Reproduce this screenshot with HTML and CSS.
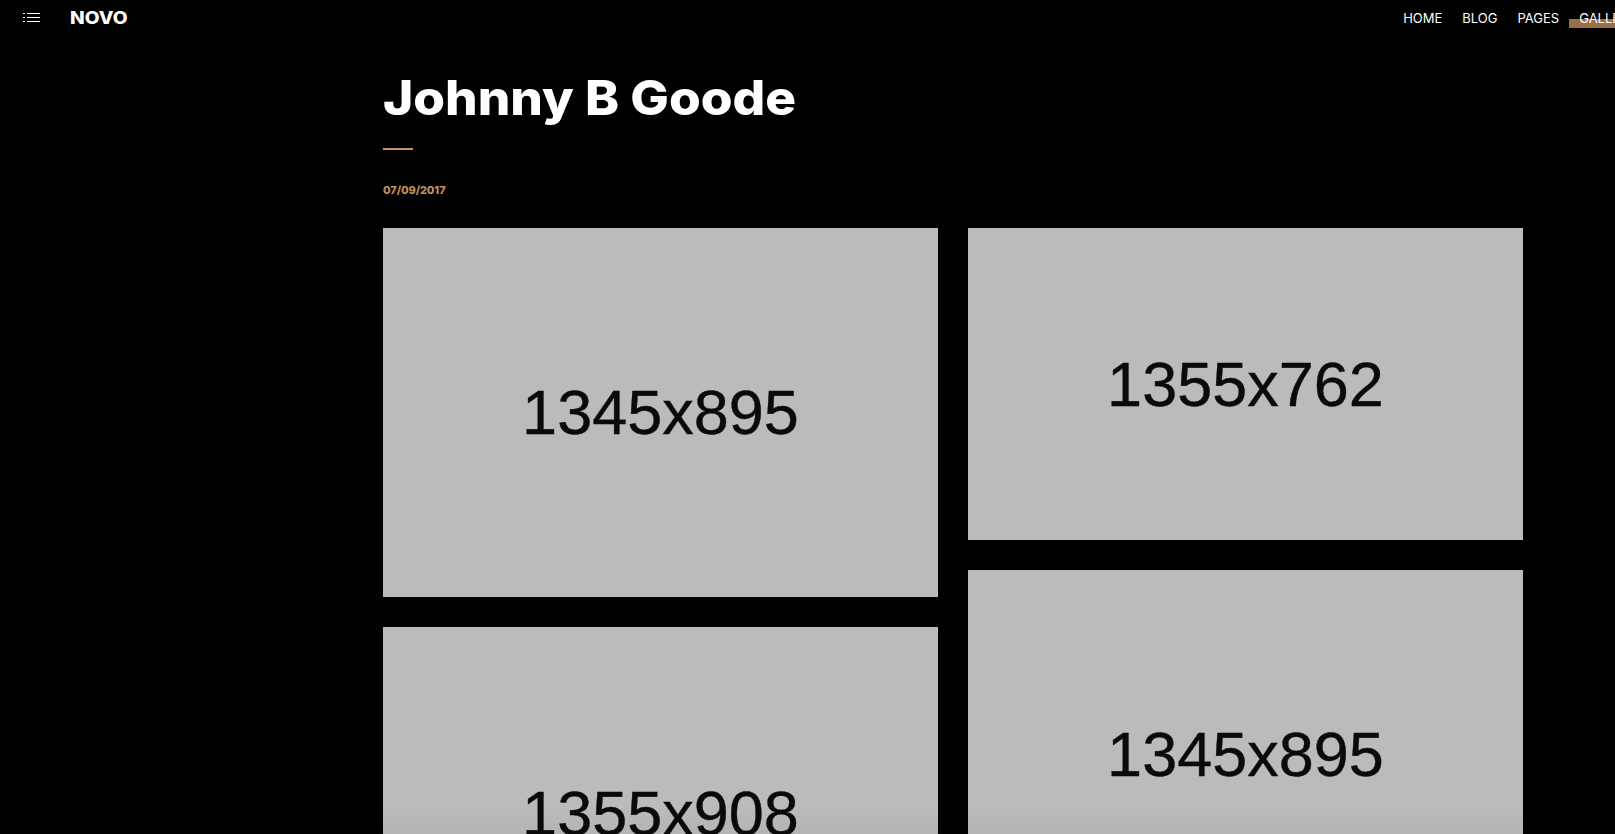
FILE: index.html
```html
<!DOCTYPE html>
<html lang="en">
<head>
<meta charset="utf-8">
<title>Johnny B Goode</title>
<link rel="stylesheet" href="styles.css">
</head>
<body>
<header class="topbar">
  <div class="brand">
    <svg class="menu-icon" width="17" height="10" viewBox="0 0 17 10" aria-hidden="true">
      <path d="M0 .5h2M4 .5h13M0 4.5h2M4 4.5h13M0 8.5h2M4 8.5h13" stroke="#fff" stroke-width="1" fill="none"/>
    </svg>
    <span class="logo">NOVO</span>
  </div>
  <nav class="nav">
    <a>HOME</a>
    <a>BLOG</a>
    <a>PAGES</a>
    <a class="active">GALLERY</a>
  </nav>
</header>
<main class="post">
  <h1 class="title">Johnny B Goode</h1>
  <div class="rule"></div>
  <p class="date">07/09/2017</p>
  <div class="gallery">
    <div class="col">
      <div class="ph ph-a">1345x895</div>
      <div class="ph ph-c fade-left">1355x908</div>
    </div>
    <div class="col">
      <div class="ph ph-b">1355x762</div>
      <div class="ph ph-a fade-right">1345x895</div>
    </div>
  </div>
</main>
</body>
</html>
```
FILE: styles.css
```css
* { box-sizing: border-box; }
html, body { margin: 0; height: 834px; overflow: hidden; background: #000; }
body { font-family: "Inter", "Liberation Sans", sans-serif; color: #fff; }
.topbar { height: 36px; display: flex; justify-content: space-between; width: 1700px; }
.brand { display: flex; align-items: center; }
.menu-icon { margin-left: 23px; }
.logo { margin-left: 30px; font-size: 17px; font-weight: 800; transform: scaleX(1.13); transform-origin: left center; }
.nav { display: flex; gap: 20px; margin-right: 63px; font-size: 13px; line-height: 36px; }
.nav a { position: relative; z-index: 1; }
.nav .active::before { content: ""; position: absolute; z-index: -1; left: -10px; right: -10px; top: 19px; height: 9px; background: #9c6f46; }
.post { width: 1140px; margin-left: 383px; }
.title { margin: 32px 0 0; font-size: 48px; line-height: 60px; font-weight: 800; transform: scaleX(1.07); transform-origin: left center; }
.rule { width: 30px; height: 2px; margin-top: 20px; background: #c89560; }
.date { margin: 32px 0 0; font-size: 11px; line-height: 16px; font-weight: 800; letter-spacing: -0.1px; color: #c08f5c; }
.gallery { display: flex; gap: 30px; margin-top: 30px; }
.col { width: 555px; display: flex; flex-direction: column; gap: 30px; }
.ph { display: flex; align-items: center; justify-content: center; background: #bbb; color: #0a0a0a; font-family: "Liberation Sans", Arial, sans-serif; font-size: 63px; line-height: 1; -webkit-text-stroke: 0.4px #0a0a0a; }
.ph-a { height: 369px; }
.ph-b { height: 312px; }
.ph-c { height: 372px; }
.fade-left { background: linear-gradient(#bbb 180px, #b4b4b4 207px); }
.fade-right { background: linear-gradient(#bbb 237px, #b4b4b4 264px); }
```
